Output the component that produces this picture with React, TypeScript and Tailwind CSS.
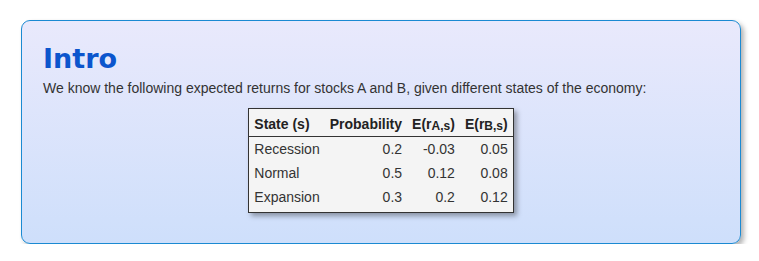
const ROWS = [
  { state: "Recession", p: "0.2", a: "-0.03", b: "0.05" },
  { state: "Normal", p: "0.5", a: "0.12", b: "0.08" },
  { state: "Expansion", p: "0.3", a: "0.2", b: "0.12" },
];

const ExpectedReturn = ({ stock }: { stock: string }) => (
  <span>
    E(r<sub className="relative -bottom-[1px] align-baseline text-[12px]">{stock},s</sub>)
  </span>
);

export default function App() {
  return (
    <div className="pl-[21px] pt-[20px] font-['Liberation_Sans',Arial,sans-serif]">
      <div className="w-[720px] rounded-[9px] border border-[#1b8ad2] bg-gradient-to-b from-[#e9e9fc] to-[#cedffb] px-[21px] pt-[24px] pb-[30px] shadow-[3px_3px_5px_rgba(0,0,0,0.3)]">
        <h1 className="font-['DejaVu_Sans',Verdana,sans-serif] text-[27px] font-bold leading-none text-[#0b55cd]">
          Intro
        </h1>
        <p className="mt-[6px] text-[14px] leading-[20px] text-[#333]">
          We know the following expected returns for stocks A and B, given different states of the
          economy:
        </p>
        <div className="mt-[10px] flex justify-center">
          <table className="border border-[#333] bg-[#f4f4f4] text-[14px] leading-[20px] text-[#333] shadow-[3px_3px_5px_rgba(0,0,0,0.35)]">
            <thead>
              <tr className="border-b border-[#333] font-bold text-[#222]">
                <th className="px-[5px] pt-[5px] pb-[2px] text-left">State (s)</th>
                <th className="px-[5px] pt-[5px] pb-[2px] text-left">Probability</th>
                <th className="px-[5px] pt-[5px] pb-[2px] text-left">
                  <ExpectedReturn stock="A" />
                </th>
                <th className="px-[5px] pt-[5px] pb-[2px] text-left">
                  <ExpectedReturn stock="B" />
                </th>
              </tr>
            </thead>
            <tbody>
              {ROWS.map((row, i) => {
                const pad = i === ROWS.length - 1 ? "pt-[2px] pb-[5px]" : "py-[2px]";
                return (
                  <tr key={row.state}>
                    <td className={`px-[5px] text-left ${pad}`}>{row.state}</td>
                    <td className={`px-[5px] text-right ${pad}`}>{row.p}</td>
                    <td className={`px-[5px] text-right ${pad}`}>{row.a}</td>
                    <td className={`px-[5px] text-right ${pad}`}>{row.b}</td>
                  </tr>
                );
              })}
            </tbody>
          </table>
        </div>
      </div>
    </div>
  );
}
